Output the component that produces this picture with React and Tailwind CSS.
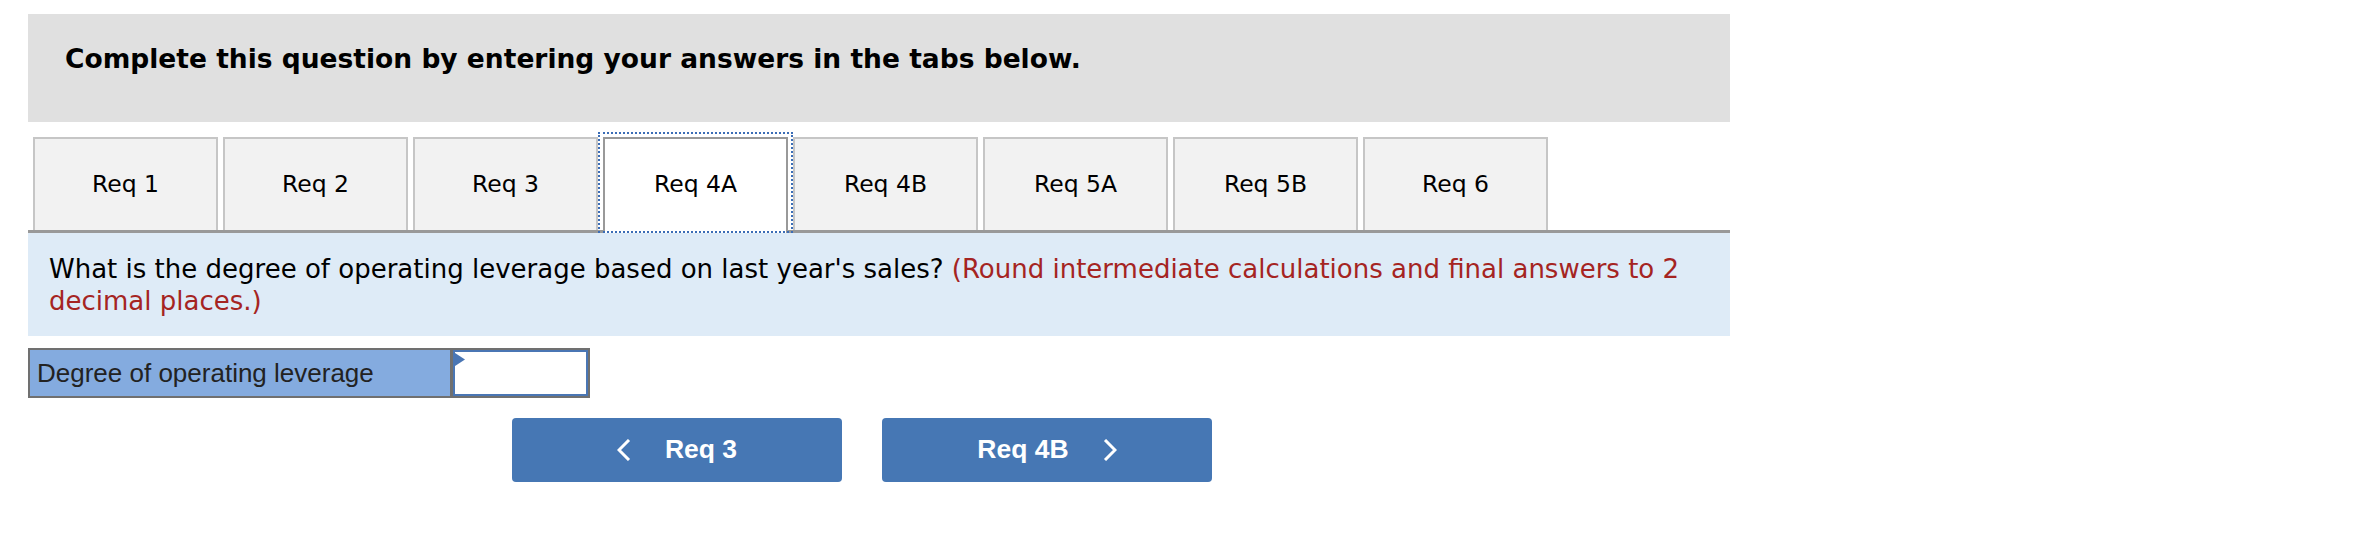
import { useState } from "react";

const tabs = ["Req 1", "Req 2", "Req 3", "Req 4A", "Req 4B", "Req 5A", "Req 5B", "Req 6"];

function Chevron({ dir }) {
  return (
    <svg width="14" height="22" viewBox="0 0 14 22" className="shrink-0">
      <polyline
        points={dir === "left" ? "12,1 2,11 12,21" : "2,1 12,11 2,21"}
        fill="none"
        stroke="white"
        strokeWidth="3"
      />
    </svg>
  );
}

export default function App() {
  const [active, setActive] = useState(3);
  const [value, setValue] = useState("");

  return (
    <div className="min-h-[540px] bg-white pl-[28px] pt-[14px]">
      <div className="w-[1702px]">

        {/* HEADER */}
        <div className="h-[108px] bg-[#e0e0e0] pl-[37px] pt-[30px]">
          <h1 className="font-['DejaVu_Sans',sans-serif] text-[26.5px] leading-[30px] font-bold text-black">
            Complete this question by entering your answers in the tabs below.
          </h1>
        </div>

        {/* TABS */}
        <div className="mt-[15px] flex items-start gap-[5px] border-b-[3px] border-[#999999] pl-[5px]">
          {tabs.map((t, i) =>
            i === active ? (
              <button
                key={t}
                onClick={() => setActive(i)}
                className="relative -mb-[3px] flex h-[96px] w-[185px] items-center justify-center border-2 border-b-0 border-[#999999] bg-white pb-[3px] font-['DejaVu_Sans',sans-serif] text-[23.5px] text-black"
              >
                <span className="pointer-events-none absolute -left-[7px] -right-[7px] -top-[7px] bottom-0 border-[2px] border-dotted border-[#3b6db6]" />
                {t}
              </button>
            ) : (
              <button
                key={t}
                onClick={() => setActive(i)}
                className="flex h-[93px] w-[185px] items-center justify-center border-2 border-b-0 border-[#c6c6c6] bg-[#f2f2f2] font-['DejaVu_Sans',sans-serif] text-[23.5px] text-black"
              >
                {t}
              </button>
            )
          )}
        </div>

        {/* QUESTION */}
        <div className="bg-[#deebf7] pb-[19px] pl-[21px] pr-[21px] pt-[20px] font-['DejaVu_Sans',sans-serif] text-[26px] leading-[32px] text-black">
          What is the degree of operating leverage based on last year's sales?{" "}
          <span className="text-[#a52422]">
            (Round intermediate calculations and final answers to 2 decimal places.)
          </span>
        </div>

        {/* ANSWER ROW */}
        <div className="mt-[12px] flex h-[50px] w-[562px] border-2 border-[#707070]">
          <div className="flex w-[420px] items-center bg-[#84abdf] pl-[7px] font-['Liberation_Sans',sans-serif] text-[26px] text-[#222222]">
            Degree of operating leverage
          </div>
          <div className="relative flex-1 border-l-[3px] border-[#707070]">
            <input
              value={value}
              onChange={(e) => setValue(e.target.value)}
              className="h-full w-full border-2 border-[#4a76b4] bg-white px-2 text-right font-['Liberation_Sans',sans-serif] text-[24px] outline-none"
            />
            <svg width="10" height="13" viewBox="0 0 10 13" className="absolute left-[2px] top-[3px]">
              <polygon points="0,0 10,6.5 0,13" fill="#4a76b4" />
            </svg>
          </div>
        </div>

        {/* NAV */}
        <div className="ml-[484px] mt-[20px] flex gap-[40px]">
          <button
            onClick={() => setActive((a) => Math.max(0, a - 1))}
            className="flex h-[64px] w-[330px] items-center justify-center gap-[34px] rounded-[4px] bg-[#4677b4] font-['Liberation_Sans',sans-serif] text-[26.5px] font-bold text-white"
          >
            <Chevron dir="left" />
            <span>{tabs[Math.max(0, active - 1)]}</span>
          </button>
          <button
            onClick={() => setActive((a) => Math.min(tabs.length - 1, a + 1))}
            className="flex h-[64px] w-[330px] items-center justify-center gap-[34px] rounded-[4px] bg-[#4677b4] font-['Liberation_Sans',sans-serif] text-[26.5px] font-bold text-white"
          >
            <span>{tabs[Math.min(tabs.length - 1, active + 1)]}</span>
            <Chevron dir="right" />
          </button>
        </div>
      </div>
    </div>
  );
}
